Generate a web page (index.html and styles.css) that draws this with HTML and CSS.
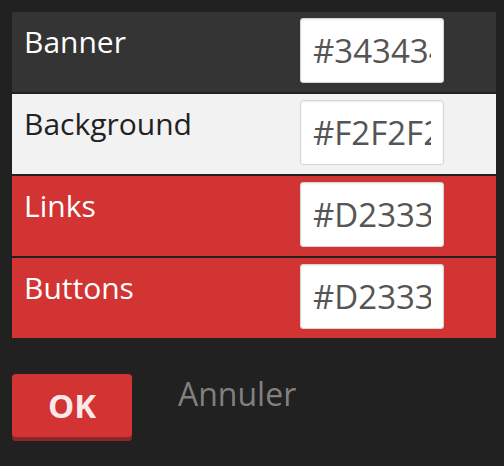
FILE: index.html
```html
<!DOCTYPE html>
<html>
<head>
<meta charset="utf-8">
<link rel="stylesheet" href="styles.css">
</head>
<body>
<div class="panel">
  <div class="rows">
    <div class="row row-banner">
      <span class="label">Banner</span>
      <input class="color-input" type="text" value="#343434">
    </div>
    <div class="row row-background">
      <span class="label">Background</span>
      <input class="color-input" type="text" value="#F2F2F2">
    </div>
    <div class="row row-links">
      <span class="label">Links</span>
      <input class="color-input" type="text" value="#D23333">
    </div>
    <div class="row row-buttons">
      <span class="label">Buttons</span>
      <input class="color-input" type="text" value="#D23333">
    </div>
  </div>
  <div class="actions">
    <button class="btn-ok" type="button">OK</button>
    <a class="cancel">Annuler</a>
  </div>
</div>
</body>
</html>
```
FILE: styles.css
```css
html, body {
  margin: 0;
  padding: 0;
}
body {
  background: #212121;
  font-family: "Open Sans", "Liberation Sans", sans-serif;
  width: 504px;
  height: 466px;
  overflow: hidden;
}
.panel {
  padding: 12px 8px 0 12px;
}
.rows {
  display: flex;
  flex-direction: column;
  gap: 2px;
}
.row {
  height: 80px;
  box-sizing: border-box;
  display: flex;
  align-items: flex-start;
  padding: 6px 52px 0 12px;
}
.label {
  flex: 1;
  font-size: 30px;
  line-height: 36px;
  padding-top: 6px;
}
.row-banner { background: #343434; color: #ffffff; }
.row-background { background: #f2f2f2; color: #222222; }
.row-links, .row-buttons { background: #d23333; color: #ffffff; }

.color-input {
  width: 144px;
  height: 65px;
  box-sizing: border-box;
  margin: 0;
  padding: 0 12px;
  border: 1px solid #d6d6d6;
  border-radius: 3px;
  background: #ffffff;
  box-shadow: inset 0 1px 2px rgba(0,0,0,0.08);
  font-family: "Open Sans", "Liberation Sans", sans-serif;
  font-size: 33px;
  color: #555555;
  outline: none;
}
.actions {
  display: flex;
  align-items: flex-start;
  padding-top: 36px;
}
.btn-ok {
  width: 120px;
  height: 63px;
  margin: 0;
  padding: 0;
  border: none;
  border-radius: 4px;
  background: #d23333;
  box-shadow: 0 4px 0 #8c2729;
  color: #fbe8e9;
  font-family: "Open Sans", "Liberation Sans", sans-serif;
  font-weight: 700;
  font-size: 33px;
  line-height: 63px;
}
.cancel {
  margin-left: 46px;
  font-size: 32px;
  line-height: 40px;
  color: #808080;
}
```
